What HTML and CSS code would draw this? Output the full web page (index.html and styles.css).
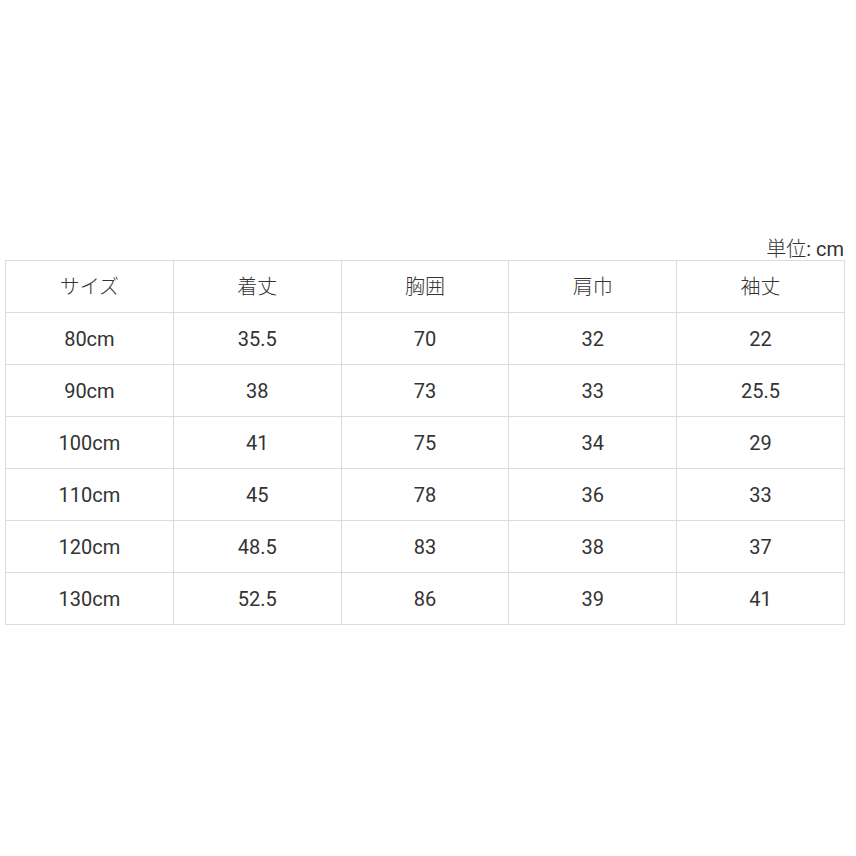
FILE: index.html
```html
<!DOCTYPE html>
<html lang="ja">
<head>
<meta charset="utf-8">
<link rel="stylesheet" href="styles.css">
</head>
<body>
<div class="wrap">
  <div class="unit"><span class="jp">単位</span>: cm</div>
  <table class="size">
    <tr class="head"><td>サイズ</td><td>着丈</td><td>胸囲</td><td>肩巾</td><td>袖丈</td></tr>
    <tr><td>80cm</td><td>35.5</td><td>70</td><td>32</td><td>22</td></tr>
    <tr><td>90cm</td><td>38</td><td>73</td><td>33</td><td>25.5</td></tr>
    <tr><td>100cm</td><td>41</td><td>75</td><td>34</td><td>29</td></tr>
    <tr><td>110cm</td><td>45</td><td>78</td><td>36</td><td>33</td></tr>
    <tr><td>120cm</td><td>48.5</td><td>83</td><td>38</td><td>37</td></tr>
    <tr><td>130cm</td><td>52.5</td><td>86</td><td>39</td><td>41</td></tr>
  </table>
</div>
</body>
</html>
```
FILE: styles.css
```css
html, body {
  margin: 0;
  padding: 0;
  background: #fff;
}
.wrap {
  padding: 238px 12px 0 5px;
  font-family: Roboto, "Noto Sans CJK JP", sans-serif;
  color: #333;
}
.unit {
  text-align: right;
  font-size: 20px;
  line-height: 22px;
}
.unit .jp {
  font-weight: 300;
}
.size {
  border-collapse: collapse;
  width: 840px;
  table-layout: fixed;
}
.size td {
  border: 1px solid #dcdcdc;
  height: 51px;
  padding: 0;
  text-align: center;
  vertical-align: middle;
  font-size: 20px;
  line-height: 24px;
}
.size .head td {
  font-weight: 300;
}
```
